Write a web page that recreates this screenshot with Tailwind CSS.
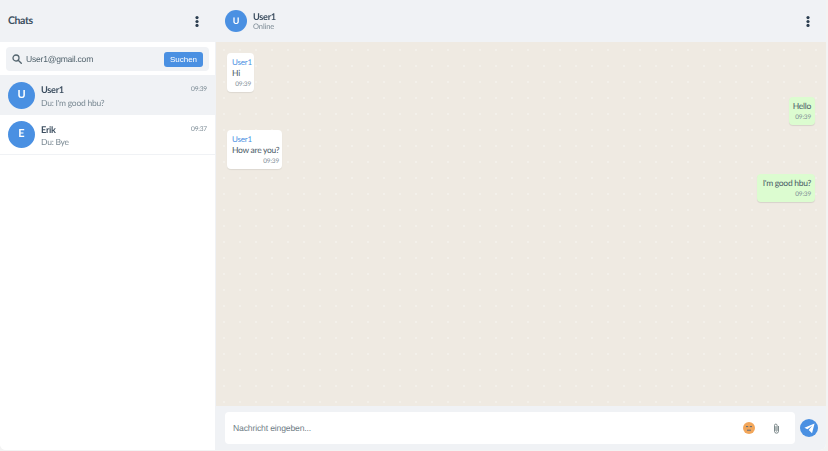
<!DOCTYPE html>
<html lang="en">
<head>
    <meta charset="UTF-8">
    <meta name="viewport" content="width=device-width, initial-scale=1.0">
    <title>Chats</title>
    <script src="https://cdn.jsdelivr.net/npm/@tailwindcss/browser@4"></script>
</head>
<body class="bg-[#f3f3f3] h-[451px] w-[828px] overflow-hidden font-['Lato','Open_Sans',sans-serif] [text-rendering:geometricPrecision]">
    <div class="flex h-[450px] w-[826px] bg-white rounded-b-md overflow-hidden blur-[0.4px]">
        <!-- sidebar -->
        <div class="w-[216px] flex flex-col bg-white border-r border-[#f0f2f5]">
            <div class="h-[42px] bg-[#f0f2f5] flex items-center justify-between pl-2 pr-[16px]">
                <h1 class="text-[10.5px] font-bold tracking-[-0.4px] text-[#3d4f60] pt-[1px]">Chats</h1>
                <svg class="w-[4px] h-[11px]" viewBox="0 0 4 11" fill="#2c3e50">
                    <circle cx="2" cy="1.6" r="1.6"/><circle cx="2" cy="5.5" r="1.6"/><circle cx="2" cy="9.4" r="1.6"/>
                </svg>
            </div>
            <div class="h-[33px] pt-[5px] px-[6px]">
                <div class="h-[24px] w-[203px] bg-[#f0f2f5] rounded flex items-center pl-[6px] pr-[6px]">
                    <svg class="w-[10px] h-[10px] shrink-0" viewBox="0 0 10 10" fill="none" stroke="#54656f" stroke-width="1.3">
                        <circle cx="4" cy="4" r="3"/><path d="M6.2 6.2 9.3 9.3" stroke-linecap="round"/>
                    </svg>
                    <span class="ml-[4px] flex-1 text-[8.6px] tracking-[-0.25px] text-[#54656f] font-['Liberation_Sans',sans-serif]">User1@gmail.com</span>
                    <button class="w-[39px] h-[15px] bg-[#4a90e2] rounded-[3px] text-white text-[8px] leading-[15px] font-['Liberation_Sans',sans-serif]">Suchen</button>
                </div>
            </div>
            <div class="h-[40px] bg-[#f0f2f5] flex items-center pl-2 pr-[8px]">
                <div class="w-[27px] h-[27px] rounded-full bg-[#4a90e2] text-white text-[11px] font-bold flex items-center justify-center">U</div>
                <div class="flex-1 ml-[6px] pt-[2px]">
                    <div class="flex justify-between items-center h-[13px]">
                        <span class="text-[9.2px] font-bold tracking-[-0.3px] text-[#3d4f60]">User1</span>
                        <span class="text-[6.6px] tracking-[-0.2px] text-[#7b8a94]">09:39</span>
                    </div>
                    <div class="text-[8.5px] tracking-[-0.25px] text-[#7b8a94] leading-[12px]">Du: I'm good hbu?</div>
                </div>
            </div>
            <div class="h-[40px] border-b border-[#f0f2f5] flex items-center pl-2 pr-[8px]">
                <div class="w-[27px] h-[27px] rounded-full bg-[#4a90e2] text-white text-[11px] font-bold flex items-center justify-center">E</div>
                <div class="flex-1 ml-[6px] pt-[2px]">
                    <div class="flex justify-between items-center h-[13px]">
                        <span class="text-[9.2px] font-bold tracking-[-0.3px] text-[#3d4f60]">Erik</span>
                        <span class="text-[6.6px] tracking-[-0.2px] text-[#7b8a94]">09:37</span>
                    </div>
                    <div class="text-[8.5px] tracking-[-0.25px] text-[#7b8a94] leading-[12px]">Du: Bye</div>
                </div>
            </div>
        </div>
        <!-- chat -->
        <div class="flex-1 flex flex-col">
            <div class="h-[42px] bg-[#f0f2f5] flex items-center pl-[9px] pr-[16px]">
                <div class="w-[22px] h-[22px] rounded-full bg-[#4a90e2] text-white text-[9px] font-bold flex items-center justify-center">U</div>
                <div class="ml-[6px] flex-1 pb-[1px]">
                    <div class="text-[9.2px] font-bold tracking-[-0.3px] text-[#3d4f60] leading-[11px]">User1</div>
                    <div class="text-[7.5px] tracking-[-0.1px] text-[#7b8a94] leading-[9px]">Online</div>
                </div>
                <svg class="w-[4px] h-[11px]" viewBox="0 0 4 11" fill="#2c3e50">
                    <circle cx="2" cy="1.6" r="1.6"/><circle cx="2" cy="5.5" r="1.6"/><circle cx="2" cy="9.4" r="1.6"/>
                </svg>
            </div>
            <div class="h-[364px] bg-[#efeae2] bg-[radial-gradient(circle,#f3f0ea_1px,transparent_1.5px)] bg-[size:16px_16px] pt-[11px] pl-[11px] pr-[11px] flex flex-col gap-[5px]">
                <div class="self-start bg-white rounded-[4px] shadow-[0_1px_1px_rgba(0,0,0,0.08)] pl-[5px] pr-[3px] pt-[4px] w-[27px] h-[39px]">
                    <div class="text-[8px] tracking-[-0.2px] text-[#4a90e2] leading-[10px]">User1</div>
                    <div class="text-[8.5px] tracking-[-0.3px] text-[#4a5a66] leading-[12px]">Hi</div>
                    <div class="text-[6.4px] tracking-[-0.15px] text-[#7b8a94] text-right leading-[11px]">09:39</div>
                </div>
                <div class="self-end bg-[#dcfcd0] rounded-[4px] shadow-[0_1px_1px_rgba(0,0,0,0.1)] pl-[3px] pr-[4px] pt-[3px] w-[26px] h-[28px]">
                    <div class="text-[8.5px] tracking-[-0.3px] text-[#4a5a66] leading-[12px] text-right">Hello</div>
                    <div class="text-[6.4px] tracking-[-0.15px] text-[#7b8a94] text-right leading-[11px]">09:39</div>
                </div>
                <div class="self-start bg-white rounded-[4px] shadow-[0_1px_1px_rgba(0,0,0,0.08)] pl-[5px] pr-[3px] pt-[4px] w-[55px] h-[39px]">
                    <div class="text-[8px] tracking-[-0.2px] text-[#4a90e2] leading-[10px]">User1</div>
                    <div class="text-[8.5px] tracking-[-0.3px] text-[#4a5a66] leading-[12px] whitespace-nowrap">How are you?</div>
                    <div class="text-[6.4px] tracking-[-0.15px] text-[#7b8a94] text-right leading-[11px]">09:39</div>
                </div>
                <div class="self-end bg-[#dcfcd0] rounded-[4px] shadow-[0_1px_1px_rgba(0,0,0,0.1)] pr-[4px] pt-[3px] w-[58px] h-[28px]">
                    <div class="text-[8.5px] tracking-[-0.3px] text-[#4a5a66] leading-[12px] text-right whitespace-nowrap">I'm good hbu?</div>
                    <div class="text-[6.4px] tracking-[-0.15px] text-[#7b8a94] text-right leading-[11px]">09:39</div>
                </div>
            </div>
            <div class="flex-1 bg-[#f0f2f5] flex items-center pl-[9px] pr-[8px]">
                <div class="w-[570px] h-[32px] bg-white rounded-[4px] flex items-center pl-[8px]">
                    <span class="flex-1 text-[8.6px] tracking-[-0.15px] text-[#6f7d86] font-['Liberation_Sans',sans-serif] pt-[1px]">Nachricht eingeben...</span>
                    <svg class="w-[12px] h-[12px] mr-[18px]" viewBox="0 0 12 12">
                        <circle cx="6" cy="6" r="6" fill="#f2a65a"/>
                        <path d="M3 4.6h2.2M6.8 4.6H9" stroke="#5b6b7a" stroke-width="1"/>
                        <path d="M4 8.2h4" stroke="#5b6b7a" stroke-width="1"/>
                    </svg>
                    <svg class="w-[7px] h-[11px] mr-[15px]" viewBox="0 0 7 11" fill="none" stroke="#7d8a8c" stroke-width="1">
                        <path d="M5.5 3v5.2a2 2 0 0 1-4 0V2.4a1.3 1.3 0 0 1 2.6 0v5.2a.6.6 0 0 1-1.2 0V3.2"/>
                    </svg>
                </div>
                <div class="w-[18px] h-[18px] ml-[5px] rounded-full bg-[#4a90e2] flex items-center justify-center">
                    <svg class="w-[11px] h-[11px]" viewBox="0 0 10 10" fill="white">
                        <path d="M9.6.4.4 4.4l2.7 1.2L7.6 2.3 4.3 6.4l3 2.9z"/>
                    </svg>
                </div>
            </div>
        </div>
    </div>
</body>
</html>
